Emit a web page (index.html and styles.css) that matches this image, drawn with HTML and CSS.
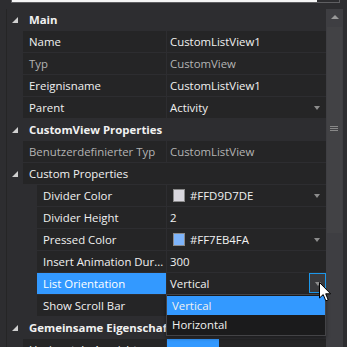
FILE: index.html
```html
<!DOCTYPE html>
<html lang="de">
<head>
  <meta charset="UTF-8" />
  <title>Eigenschaften</title>
  <link rel="stylesheet" href="styles.css">
</head>
<body>
  <div class="search">
    <div class="search-field"></div>
    <div class="search-btn"></div>
  </div>

  <div class="panel">
    <div class="grid">
      <div class="row cat">
        <div class="gutter"><span class="expander"></span></div>
        <div class="label">Main</div>
      </div>
      <div class="row">
        <div class="gutter"></div>
        <div class="name">Name</div>
        <div class="value">CustomListView1</div>
      </div>
      <div class="row readonly">
        <div class="gutter"></div>
        <div class="name">Typ</div>
        <div class="value">CustomView</div>
      </div>
      <div class="row">
        <div class="gutter"></div>
        <div class="name">Ereignisname</div>
        <div class="value">CustomListView1</div>
      </div>
      <div class="row">
        <div class="gutter"></div>
        <div class="name">Parent</div>
        <div class="value">Activity<span class="arrow"></span></div>
      </div>

      <div class="row cat">
        <div class="gutter"><span class="expander"></span></div>
        <div class="label">CustomView Properties</div>
      </div>
      <div class="row readonly">
        <div class="gutter"></div>
        <div class="name">Benutzerdefinierter Typ</div>
        <div class="value">CustomListView</div>
      </div>
      <div class="row group">
        <div class="gutter"><span class="expander"></span></div>
        <div class="name">Custom Properties</div>
      </div>
      <div class="row sub">
        <div class="gutter"></div>
        <div class="name">Divider Color</div>
        <div class="value"><span class="swatch swatch-divider"></span>#FFD9D7DE<span class="arrow"></span></div>
      </div>
      <div class="row sub">
        <div class="gutter"></div>
        <div class="name">Divider Height</div>
        <div class="value">2</div>
      </div>
      <div class="row sub">
        <div class="gutter"></div>
        <div class="name">Pressed Color</div>
        <div class="value"><span class="swatch swatch-pressed"></span>#FF7EB4FA<span class="arrow"></span></div>
      </div>
      <div class="row sub">
        <div class="gutter"></div>
        <div class="name">Insert Animation Dur...</div>
        <div class="value">300</div>
      </div>
      <div class="row sub selected">
        <div class="gutter"></div>
        <div class="name">List Orientation</div>
        <div class="value">Vertical<span class="drop-btn"><span class="arrow"></span></span></div>
      </div>
      <div class="row sub">
        <div class="gutter"></div>
        <div class="name">Show Scroll Bar</div>
        <div class="value"></div>
      </div>

      <div class="row cat">
        <div class="gutter"><span class="expander"></span></div>
        <div class="label">Gemeinsame Eigenschaft</div>
      </div>
      <div class="row">
        <div class="gutter"></div>
        <div class="name">Horizontale Ausrichtung</div>
        <div class="value"><span class="bar"></span></div>
      </div>

      <div class="dropdown">
        <div class="option active">Vertical</div>
        <div class="option">Horizontal</div>
      </div>

      <svg class="cursor" width="13" height="20" viewBox="0 0 13 20">
        <path d="M0.5 0.5 L0.5 16 L4.2 12.6 L6.8 18.8 L9.2 17.8 L6.7 11.8 L11.6 11.8 Z" fill="#fff" stroke="#000" stroke-width="1"/>
      </svg>
    </div>

    <div class="scrollbar">
      <div class="sb-btn"><span class="up"></span></div>
      <div class="sb-thumb"><span class="grip"></span></div>
    </div>
  </div>
</body>
</html>
```

FILE: styles.css
```css
* {
  box-sizing: border-box;
  margin: 0;
  padding: 0;
}
body {
  background: #2d2d30;
  width: 347px;
  height: 347px;
  overflow: hidden;
  font-family: 'Open Sans', 'Noto Sans', sans-serif;
  font-size: 11.4px;
  color: #f1f1f1;
}
.search {
  display: flex;
  margin-left: 11px;
  width: 329px;
  height: 3px;
  border: 1px solid #5f5f62;
  border-top: none;
}
.search-field {
  flex: 1;
  background: #f5f5f5;
}
.search-btn {
  width: 22px;
  background: #2d2d30;
}
.panel {
  display: flex;
  margin-top: 6px;
  height: 338px;
}
.grid {
  position: relative;
  width: 320px;
  margin-left: 6px;
  border-left: 1px solid #252526;
  background: #2d2d30;
}
.row {
  display: flex;
  height: 22px;
  line-height: 22px;
  white-space: nowrap;
}
.gutter {
  width: 16px;
  flex: none;
  position: relative;
  background: #2d2d30;
}
.row.sub .gutter {
  width: 30px;
}
.expander {
  position: absolute;
  left: 5px;
  top: 8px;
  width: 0;
  height: 0;
  border-left: 6px solid transparent;
  border-bottom: 6px solid #d0d0d0;
}
.label {
  flex: 1;
  padding-left: 6px;
  font-weight: bold;
  border-bottom: 1px solid #2d2d30;
  overflow: hidden;
}
.name {
  width: 143px;
  flex: none;
  padding-left: 6px;
  background: #252526;
  border-bottom: 1px solid #2d2d30;
  overflow: hidden;
}
.row.sub .name {
  width: 129px;
}
.row.group .name {
  flex: 1;
  width: auto;
}
.value {
  flex: 1;
  position: relative;
  display: flex;
  align-items: center;
  padding-left: 3px;
  background: #252526;
  border-left: 1px solid #2d2d30;
  border-bottom: 1px solid #2d2d30;
}
.readonly .name,
.readonly .value {
  color: #b4b4b4;
}
.arrow {
  position: absolute;
  right: 6px;
  top: 9px;
  width: 0;
  height: 0;
  border-left: 3px solid transparent;
  border-right: 3px solid transparent;
  border-top: 4px solid #8c8c8c;
}
.swatch {
  width: 12px;
  height: 13px;
  margin: 0 5px 0 3px;
  border: 1px solid #8a8a8a;
}
.swatch-divider {
  background: #d9d7de;
}
.swatch-pressed {
  background: #7eb4fa;
}
.selected .name {
  background: #3399ff;
  color: #fff;
}
.drop-btn {
  position: absolute;
  right: 0;
  top: 0;
  width: 17px;
  height: 20px;
  background: #3a3a3d;
  border: 1px solid #1c97ea;
}
.drop-btn .arrow {
  right: 4px;
  top: 8px;
}
.bar {
  width: 52px;
  height: 21px;
  margin-left: -3px;
  background: #3399ff;
}
.dropdown {
  position: absolute;
  left: 159px;
  top: 285px;
  width: 160px;
  padding: 1px 0;
  background: #1b1b1c;
  border: 1px solid #434346;
  box-shadow: 0 2px 4px rgba(0, 0, 0, 0.4);
}
.option {
  height: 19px;
  line-height: 19px;
  padding-left: 5px;
}
.option.active {
  background: #3399ff;
}
.cursor {
  position: absolute;
  left: 312px;
  top: 273px;
}
.scrollbar {
  width: 17px;
  background: #3e3e42;
}
.sb-btn {
  height: 17px;
  position: relative;
  background: #3e3e42;
}
.up {
  position: absolute;
  left: 5px;
  top: 6px;
  width: 0;
  height: 0;
  border-left: 4px solid transparent;
  border-right: 4px solid transparent;
  border-bottom: 4px solid #999;
}
.sb-thumb {
  position: relative;
  margin: 1px 1px 0;
  height: 206px;
  background: #424245;
}
.grip {
  position: absolute;
  left: 3px;
  top: 99px;
  width: 8px;
  height: 5px;
  border-top: 1px solid #888;
  border-bottom: 1px solid #888;
}
.grip::after {
  content: '';
  position: absolute;
  left: 0;
  right: 0;
  top: 1px;
  border-top: 1px solid #888;
}
```
